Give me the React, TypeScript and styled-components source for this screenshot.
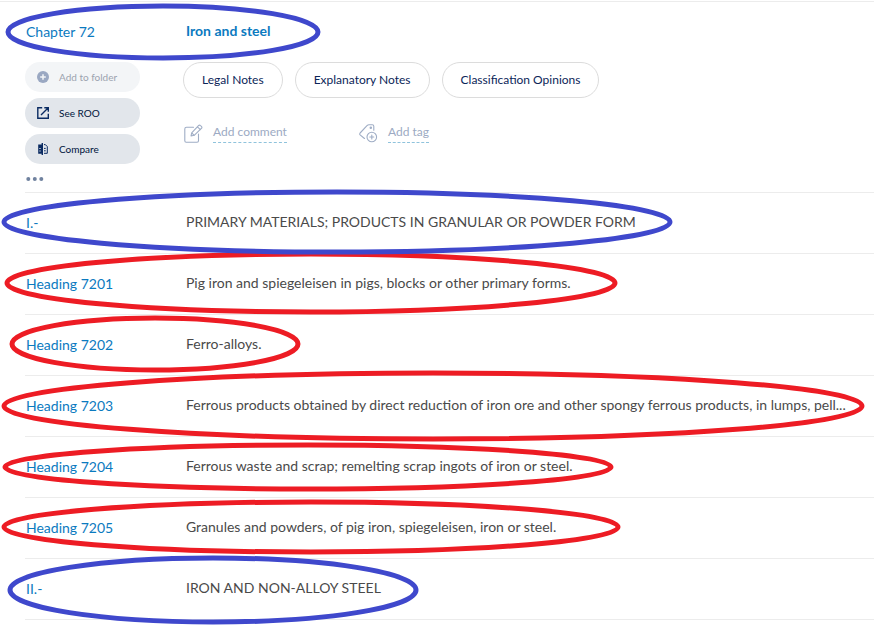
import React from 'react';
import styled, { createGlobalStyle } from 'styled-components';

const GlobalStyle = createGlobalStyle`
  * { box-sizing: border-box; }
  body {
    margin: 0;
    background: #fff;
    color: #4a4a4a;
    font-family: Lato, "Liberation Sans", sans-serif;
    font-size: 14px;
  }
`;

const Page = styled.main`
  position: relative;
  overflow: hidden;
  padding-top: 1px;
  padding-bottom: 5px;
`;

const Chapter = styled.section`
  border-top: 1px solid #ececec;
`;

const Columns = styled.div`
  display: grid;
  grid-template-columns: 161px minmax(0, 1fr);
  align-items: center;
  padding-bottom: 2px;
`;

const TitleRow = styled(Columns)`
  height: 60px;
  padding-left: 25px;
`;

const CodeLink = styled.a`
  padding: 2px 0 0 1px;
  color: #0b7abf;
  font-size: 14px;
  line-height: 20px;
  text-decoration: none;
`;

const TitleLink = styled.a`
  color: #0b7abf;
  font-size: 14px;
  font-weight: 700;
  line-height: 20px;
  text-decoration: none;
`;

const Details = styled.div`
  display: grid;
  grid-template-columns: 158px minmax(0, 1fr);
  padding-left: 25px;
`;

const Actions = styled.div`
  display: flex;
  flex-direction: column;
  align-items: flex-start;
  gap: 6px;
  height: 130px;
`;

const ActionButton = styled.button`
  display: flex;
  align-items: center;
  gap: 10px;
  width: 115px;
  height: 30px;
  padding: 0 12px;
  border: 0;
  border-radius: 15px;
  background: #e2e6eb;
  color: #00143c;
  font-family: inherit;
  font-size: 10px;
  line-height: 16px;

  &:disabled {
    background: #f3f5f7;
    color: #9ca3af;
  }
`;

const MoreButton = styled.button`
  display: flex;
  padding: 6px 0 0 1px;
  border: 0;
  background: none;
`;

const Pills = styled.div`
  display: flex;
  flex-wrap: wrap;
  gap: 12px;
`;

const Pill = styled.button`
  height: 36px;
  padding: 0 18px 2px;
  border: 1px solid #dcdcdc;
  border-radius: 18px;
  background: #fff;
  color: #0b2558;
  font-family: inherit;
  font-size: 12px;
`;

const Extras = styled.div`
  display: grid;
  grid-template-columns: 175px auto;
  justify-content: start;
  padding-top: 25px;
`;

const ExtraButton = styled.button`
  display: flex;
  align-items: center;
  gap: 10px;
  padding: 0 0 0 1px;
  border: 0;
  background: none;
  color: #9caac3;
  font-family: inherit;
  font-size: 12px;
  line-height: 18px;
`;

const ExtraLabel = styled.span`
  padding-bottom: 1px;
  border-bottom: 1px dashed #8fc3dc;
`;

const List = styled.ul`
  margin: 0;
  padding: 0;
  list-style: none;
`;

const Item = styled.li`
  padding-left: 25px;
`;

const ItemRow = styled(Columns)`
  height: 61px;
  border-top: 1px solid #ececec;
`;

const Description = styled.span`
  overflow: hidden;
  font-size: 14px;
  line-height: 20px;
  text-overflow: ellipsis;
  white-space: nowrap;
`;

const LastRule = styled.hr`
  margin: 0 0 0 25px;
  border: 0;
  border-top: 1px solid #ececec;
`;

const Markup = styled.svg`
  position: absolute;
  top: 0;
  left: 0;
  pointer-events: none;
`;

const PlusIcon = () => (
  <svg width="12" height="12" viewBox="0 0 12 12" aria-hidden="true">
    <circle cx="6" cy="6" r="6" fill="#9aa8c2" />
    <path d="M6 3.2v5.6M3.2 6h5.6" stroke="#f3f5f7" strokeWidth="1.5" />
  </svg>
);

const OpenIcon = () => (
  <svg width="12" height="12" viewBox="0 0 12 12" fill="none" stroke="#0a2b62" strokeWidth="1.4" aria-hidden="true">
    <path d="M5.2.8H.8v10.5h10.5V6.8M7.3.8h4v4M11 1 4 8" />
  </svg>
);

const CompareIcon = () => (
  <svg width="12" height="12" viewBox="0 0 12 12" aria-hidden="true">
    <path fill="#0a2b62" d="M1.2 1.4h3.4V0H6v12H4.6v-1.2H1.2z" />
    <path d="M2.2 5.5h1.6M2.2 8h1.6" stroke="#e2e6eb" strokeWidth=".8" />
    <path d="M7 1.6h1.3l2 2v6.7H7M7 5.4h1.7M7 7.8h1.7" fill="none" stroke="#0a2b62" strokeWidth="1" />
  </svg>
);

const CommentIcon = () => (
  <svg width="19" height="19" viewBox="0 0 19 19" fill="none" stroke="#9fadc5" strokeWidth="1.1" strokeLinejoin="round" strokeLinecap="round" aria-hidden="true">
    <path d="M9.5 3.3h-7Q.8 3.3.8 5v11.8q0 1.4 1.4 1.4H13q1.5 0 1.5-1.5V10" />
    <path d="m7 12 .7-3.2 6.8-7.2q1-1 2 0l.9.8q1 1 0 2l-7.2 6.9zM13.4 2.8l3 2.8M7.7 8.8l2.5 2.5" />
  </svg>
);

const TagIcon = () => (
  <svg width="19" height="19" viewBox="0 0 19 19" fill="none" stroke="#9fadc5" strokeWidth="1.1" strokeLinejoin="round" strokeLinecap="round" aria-hidden="true">
    <path d="M5.5 14.5 1.1 10.8q-.8-.9 0-1.8L8 1.6q.9-.9 2-.9h3.3q1.5 0 1.5 1.5v4.1" />
    <circle cx="11.8" cy="3.8" r=".7" />
    <circle cx="12.8" cy="13" r="4.8" />
    <path d="M12.8 11v4M10.8 13h4" />
  </svg>
);

const DotsIcon = () => (
  <svg width="18" height="6" viewBox="0 0 18 6" fill="#70829f" aria-hidden="true">
    <circle cx="2.3" cy="3" r="2" />
    <circle cx="8.8" cy="3" r="2" />
    <circle cx="15.3" cy="3" r="2" />
  </svg>
);

const items = [
  { code: 'I.-', text: 'PRIMARY MATERIALS; PRODUCTS IN GRANULAR OR POWDER FORM' },
  { code: 'Heading 7201', text: 'Pig iron and spiegeleisen in pigs, blocks or other primary forms.' },
  { code: 'Heading 7202', text: 'Ferro-alloys.' },
  { code: 'Heading 7203', text: 'Ferrous products obtained by direct reduction of iron ore and other spongy ferrous products, in lumps, pell...' },
  { code: 'Heading 7204', text: 'Ferrous waste and scrap; remelting scrap ingots of iron or steel.' },
  { code: 'Heading 7205', text: 'Granules and powders, of pig iron, spiegeleisen, iron or steel.' },
  { code: 'II.-', text: 'IRON AND NON-ALLOY STEEL' },
];

const RED = '#ed1c24';
const BLUE = '#3f48cc';

const marks = [
  { cx: 311, cy: 283, rx: 304, ry: 29, color: RED },
  { cx: 155, cy: 344, rx: 143, ry: 26, color: RED },
  { cx: 433, cy: 406, rx: 429, ry: 33, color: RED },
  { cx: 308, cy: 467, rx: 303, ry: 22, color: RED },
  { cx: 311, cy: 527, rx: 307, ry: 25, color: RED },
  { cx: 163, cy: 32, rx: 155, ry: 26, color: BLUE },
  { cx: 337, cy: 222, rx: 333, ry: 30, color: BLUE },
  { cx: 213, cy: 590, rx: 203, ry: 32, color: BLUE },
];

export default function App() {
  return (
    <>
      <GlobalStyle />
      <Page>
        <Chapter>
          <TitleRow>
            <CodeLink href="#chapter-72">Chapter 72</CodeLink>
            <TitleLink href="#chapter-72">Iron and steel</TitleLink>
          </TitleRow>
          <Details>
            <Actions>
              <ActionButton type="button" disabled><PlusIcon />Add to folder</ActionButton>
              <ActionButton type="button"><OpenIcon />See ROO</ActionButton>
              <ActionButton type="button"><CompareIcon />Compare</ActionButton>
              <MoreButton type="button" aria-label="More actions"><DotsIcon /></MoreButton>
            </Actions>
            <div>
              <Pills>
                <Pill type="button">Legal Notes</Pill>
                <Pill type="button">Explanatory Notes</Pill>
                <Pill type="button">Classification Opinions</Pill>
              </Pills>
              <Extras>
                <ExtraButton type="button"><CommentIcon /><ExtraLabel>Add comment</ExtraLabel></ExtraButton>
                <ExtraButton type="button"><TagIcon /><ExtraLabel>Add tag</ExtraLabel></ExtraButton>
              </Extras>
            </div>
          </Details>
        </Chapter>
        <List>
          {items.map((item) => (
            <Item key={item.code}>
              <ItemRow>
                <CodeLink href="#entry">{item.code}</CodeLink>
                <Description>{item.text}</Description>
              </ItemRow>
            </Item>
          ))}
        </List>
        <LastRule />
        <Markup width="874" height="625" viewBox="0 0 874 625" fill="none" strokeWidth="5" aria-hidden="true">
          {marks.map((mark) => (
            <ellipse key={mark.cy} cx={mark.cx} cy={mark.cy} rx={mark.rx} ry={mark.ry} stroke={mark.color} />
          ))}
        </Markup>
      </Page>
    </>
  );
}
